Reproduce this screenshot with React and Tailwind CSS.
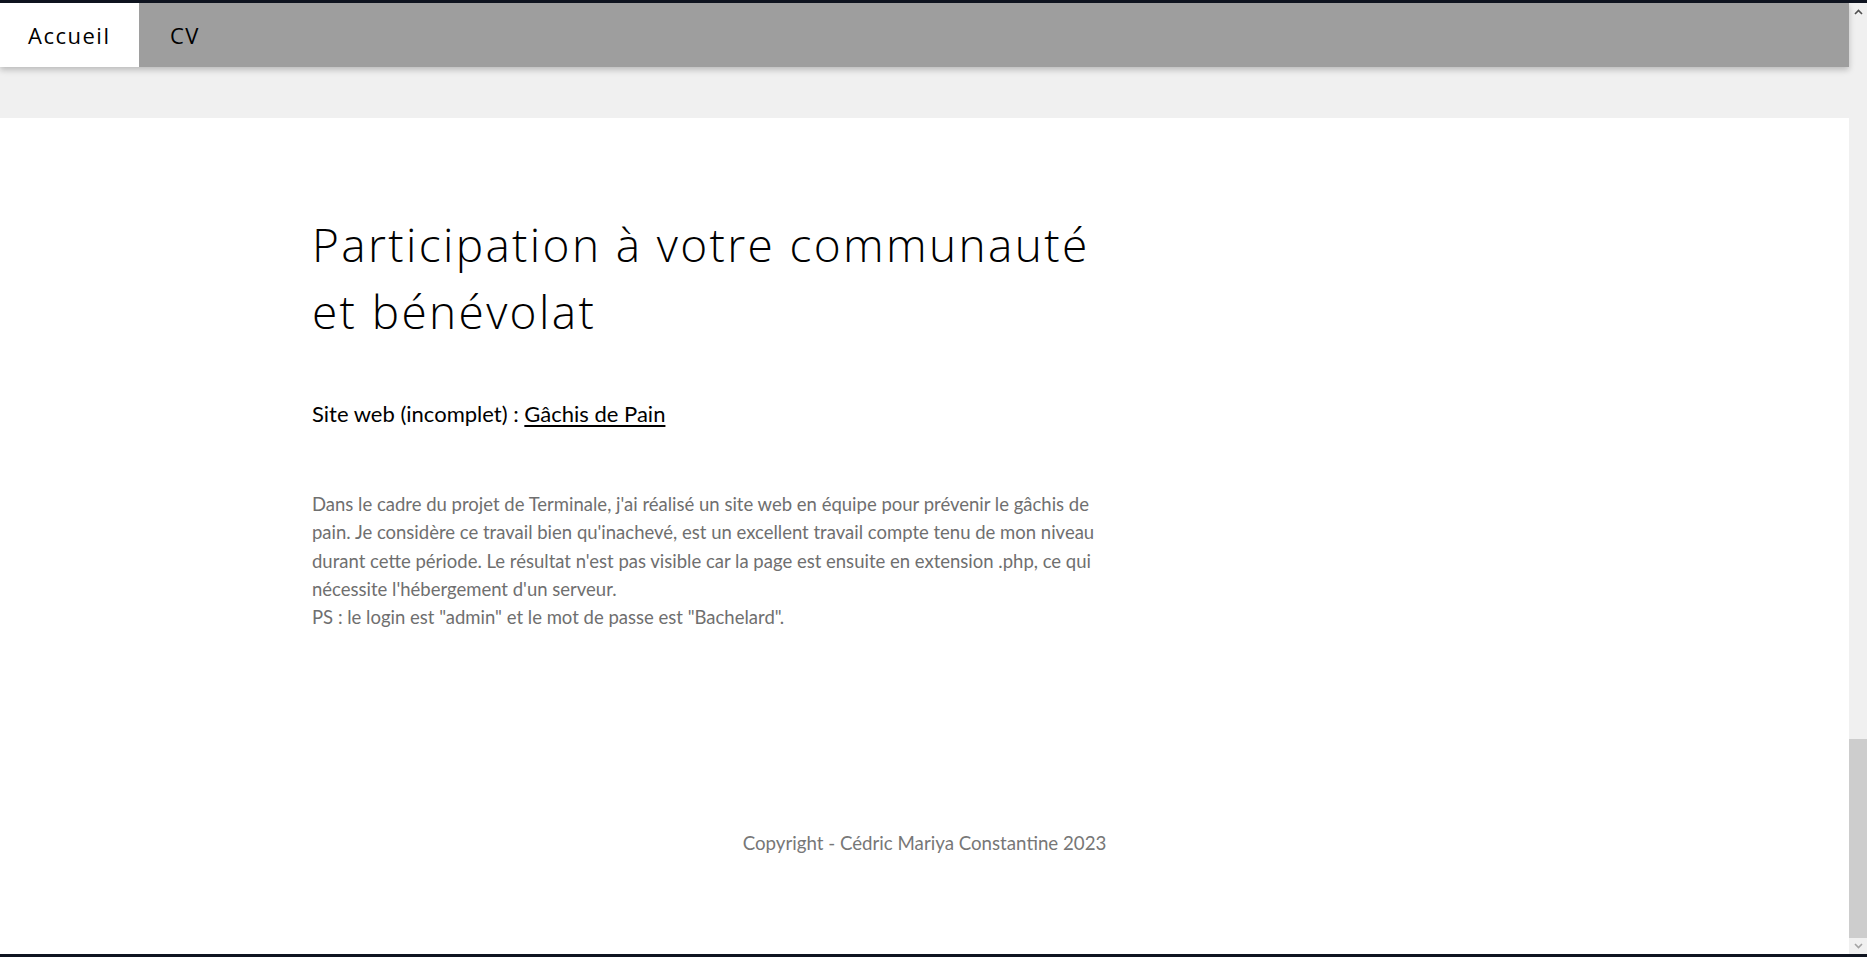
import React from 'react';

const navFont = { fontFamily: '"Open Sans", "DejaVu Sans", sans-serif' };
const lato = { fontFamily: 'Lato, sans-serif' };

function Scrollbar() {
  return (
    <div className="w-[18px] bg-[#f0f0f0] flex flex-col items-center">
      <div className="h-[18px] w-full flex items-center justify-center">
        <svg width="9" height="6" viewBox="0 0 9 6">
          <path d="M1 5 L4.5 1.5 L8 5" fill="none" stroke="#505050" strokeWidth="1.6" />
        </svg>
      </div>
      <div className="flex-1" />
      <div className="w-full h-[199px] bg-[#cdcdcd]" />
      <div className="h-[16px] w-full flex items-center justify-center">
        <svg width="9" height="6" viewBox="0 0 9 6">
          <path d="M1 1 L4.5 4.5 L8 1" fill="none" stroke="#a3a3a3" strokeWidth="1.6" />
        </svg>
      </div>
    </div>
  );
}

export default function App() {
  return (
    <div className="h-[957px] w-full flex flex-col bg-white overflow-hidden">
      <div className="h-[3px] bg-[#0f1420]" />
      <div className="flex-1 flex min-h-0">
        <div className="flex-1 flex flex-col min-w-0">
          {/* Navbar */}
          <nav className="h-[64px] flex bg-[#9e9e9e] shadow-[0_3px_6px_rgba(0,0,0,0.22)] relative z-10" style={navFont}>
            <a className="w-[139px] bg-white flex items-center pl-[28px] text-[22px] text-black tracking-[1.5px]">Accueil</a>
            <a className="flex items-center pl-[31px] text-[22px] text-black tracking-[1.5px]">CV</a>
          </nav>
          <div className="h-[51px] bg-[#f0f0f0]" />

          {/* Main */}
          <main className="flex-1 flex flex-col bg-white">
            <div className="pl-[312px] pt-[93px]">
              <div className="w-[790px]">
                <h1 className="text-[46px] leading-[67px] font-light text-black tracking-[2.35px]" style={navFont}>
                  Participation à votre communauté et bénévolat
                </h1>
                <p className="mt-[53px] text-[22px] leading-[32px] text-black" style={lato}>
                  Site web (incomplet) : <a className="underline underline-offset-[3px]">Gâchis de Pain</a>
                </p>
                <p className="mt-[60px] text-[18.5px] leading-[28.3px] text-[#6f6f6f]" style={lato}>
                  Dans le cadre du projet de Terminale, j'ai réalisé un site web en équipe pour prévenir le gâchis de pain. Je considère ce travail bien qu'inachevé, est un excellent travail compte tenu de mon niveau durant cette période. Le résultat n'est pas visible car la page est ensuite en extension .php, ce qui nécessite l'hébergement d'un serveur.
                  <br />
                  PS : le login est "admin" et le mot de passe est "Bachelard".
                </p>
              </div>
            </div>
            <footer className="mt-auto pb-[97px] text-center text-[18.7px] leading-[27px] text-[#777777]" style={lato}>
              Copyright - Cédric Mariya Constantine 2023
            </footer>
          </main>
        </div>
        <Scrollbar />
      </div>
      <div className="h-[3px] bg-[#0f1420]" />
    </div>
  );
}
